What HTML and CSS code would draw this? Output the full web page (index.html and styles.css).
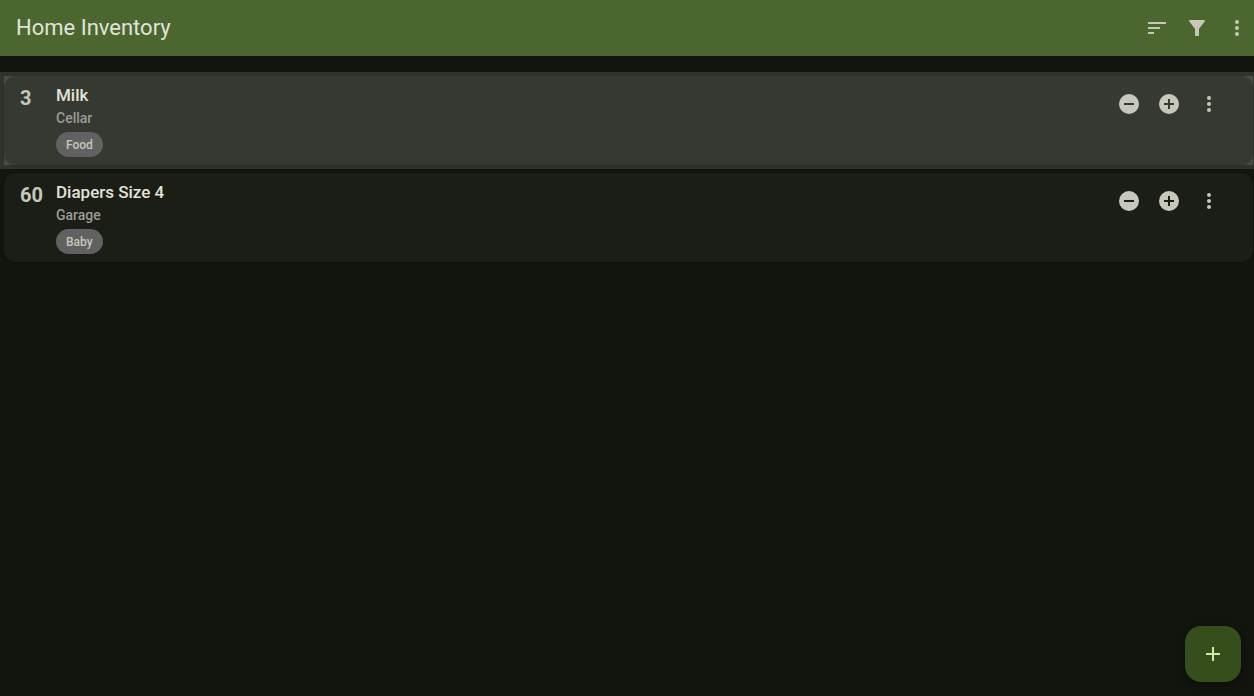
FILE: index.html
```html
<!DOCTYPE html>
<html lang="en">
<head>
<meta charset="utf-8">
<meta name="viewport" content="width=device-width, initial-scale=1">
<title>Home Inventory</title>
<link rel="stylesheet" href="styles.css">
</head>
<body>
<svg class="symbols" aria-hidden="true">
  <symbol id="sort" viewBox="0 0 24 24"><path d="M3 18h6v-2H3v2zM3 6v2h18V6H3zm0 7h12v-2H3v2z"/></symbol>
  <symbol id="filter" viewBox="0 0 24 24"><path d="M4.25 5.61C6.27 8.2 10 13 10 13v6c0 .55.45 1 1 1h2c.55 0 1-.45 1-1v-6s3.72-4.8 5.74-7.39A1 1 0 0 0 18.95 4H5.04a1 1 0 0 0-.79 1.61z"/></symbol>
  <symbol id="more" viewBox="0 0 24 24"><path d="M12 8a2 2 0 1 0 0-4 2 2 0 0 0 0 4zm0 2a2 2 0 1 0 0 4 2 2 0 0 0 0-4zm0 6a2 2 0 1 0 0 4 2 2 0 0 0 0-4z"/></symbol>
  <symbol id="minus" viewBox="0 0 24 24"><path d="M12 2a10 10 0 1 0 0 20 10 10 0 0 0 0-20zm5 11H7v-2h10v2z"/></symbol>
  <symbol id="plus" viewBox="0 0 24 24"><path d="M12 2a10 10 0 1 0 0 20 10 10 0 0 0 0-20zm5 11h-4v4h-2v-4H7v-2h4V7h2v4h4v2z"/></symbol>
  <symbol id="add" viewBox="0 0 24 24"><path d="M19 13h-6v6h-2v-6H5v-2h6V5h2v6h6v2z"/></symbol>
</svg>
<header class="app-bar">
  <h1 class="app-title">Home Inventory</h1>
  <div class="actions">
    <button class="icon-button" type="button" aria-label="Sort"><svg class="icon"><use href="#sort"/></svg></button>
    <button class="icon-button" type="button" aria-label="Filter"><svg class="icon"><use href="#filter"/></svg></button>
    <button class="icon-button" type="button" aria-label="Menu"><svg class="icon"><use href="#more"/></svg></button>
  </div>
</header>
<main>
  <ul class="inventory">
    <li class="row row-active">
      <article class="card">
        <span class="count">3</span>
        <div class="details">
          <h2 class="name">Milk</h2>
          <p class="place">Cellar</p>
          <span class="tag">Food</span>
        </div>
        <div class="actions">
          <button class="icon-button" type="button" aria-label="Remove one"><svg class="icon"><use href="#minus"/></svg></button>
          <button class="icon-button" type="button" aria-label="Add one"><svg class="icon"><use href="#plus"/></svg></button>
          <button class="icon-button" type="button" aria-label="Item menu"><svg class="icon"><use href="#more"/></svg></button>
        </div>
      </article>
    </li>
    <li class="row">
      <article class="card">
        <span class="count">60</span>
        <div class="details">
          <h2 class="name">Diapers Size 4</h2>
          <p class="place">Garage</p>
          <span class="tag">Baby</span>
        </div>
        <div class="actions">
          <button class="icon-button" type="button" aria-label="Remove one"><svg class="icon"><use href="#minus"/></svg></button>
          <button class="icon-button" type="button" aria-label="Add one"><svg class="icon"><use href="#plus"/></svg></button>
          <button class="icon-button" type="button" aria-label="Item menu"><svg class="icon"><use href="#more"/></svg></button>
        </div>
      </article>
    </li>
  </ul>
</main>
<button class="fab" type="button" aria-label="Add item"><svg class="icon"><use href="#add"/></svg></button>
</body>
</html>
```
FILE: styles.css
```css
* { box-sizing: border-box; }

body {
  margin: 0;
  min-height: 100vh;
  background: #12140e;
  color: #e2e3d8;
  font-family: Roboto, "Liberation Sans", sans-serif;
}

h1, h2, p, ul { margin: 0; padding: 0; }

.symbols { display: none; }

.icon {
  display: block;
  width: 24px;
  height: 24px;
  fill: currentColor;
}

.app-bar {
  display: flex;
  align-items: center;
  justify-content: space-between;
  height: 56px;
  padding-left: 16px;
  background: #4c6630;
}

.app-title {
  font-size: 22px;
  line-height: 28px;
  font-weight: 400;
}

.actions { display: flex; }

.icon-button {
  padding: 8px;
  border: 0;
  border-radius: 50%;
  background: none;
  color: #c5c8ba;
}

.app-bar .actions { margin-right: -3px; }

.inventory {
  padding-top: 16px;
  list-style: none;
}

.row { padding: 4px 1px 4px 4px; }

.row-active {
  background: linear-gradient(#4a4c46, #4a4c46) content-box, #30332d;
}

.card {
  display: flex;
  align-items: flex-start;
  padding: 8px 24px 8px 16px;
  border-radius: 12px;
  background: #1b1d17;
  box-shadow: 0 1px 2px #0003;
}

.row-active .card { background: #363932; }

.count {
  width: 36px;
  color: #c5c8ba;
  font-size: 20px;
  line-height: 28px;
  font-weight: 700;
}

.details { flex: 1; }

.name {
  margin-bottom: 2px;
  font-size: 17px;
  line-height: 22px;
  font-weight: 500;
}

.place {
  margin-bottom: 4px;
  color: #9b9c95;
  font-size: 14px;
  line-height: 20px;
  font-weight: 500;
}

.tag {
  display: block;
  width: fit-content;
  padding: 2px 10px 0;
  border-radius: 13px;
  background: #616161;
  color: #c5c8ba;
  font-size: 12px;
  line-height: 23px;
  font-weight: 500;
}

.fab {
  position: fixed;
  right: 13px;
  bottom: 14px;
  padding: 16px;
  border: 0;
  border-radius: 16px;
  background: #354e1b;
  color: #cdeda3;
  box-shadow: 0 3px 8px #0006;
}
```
